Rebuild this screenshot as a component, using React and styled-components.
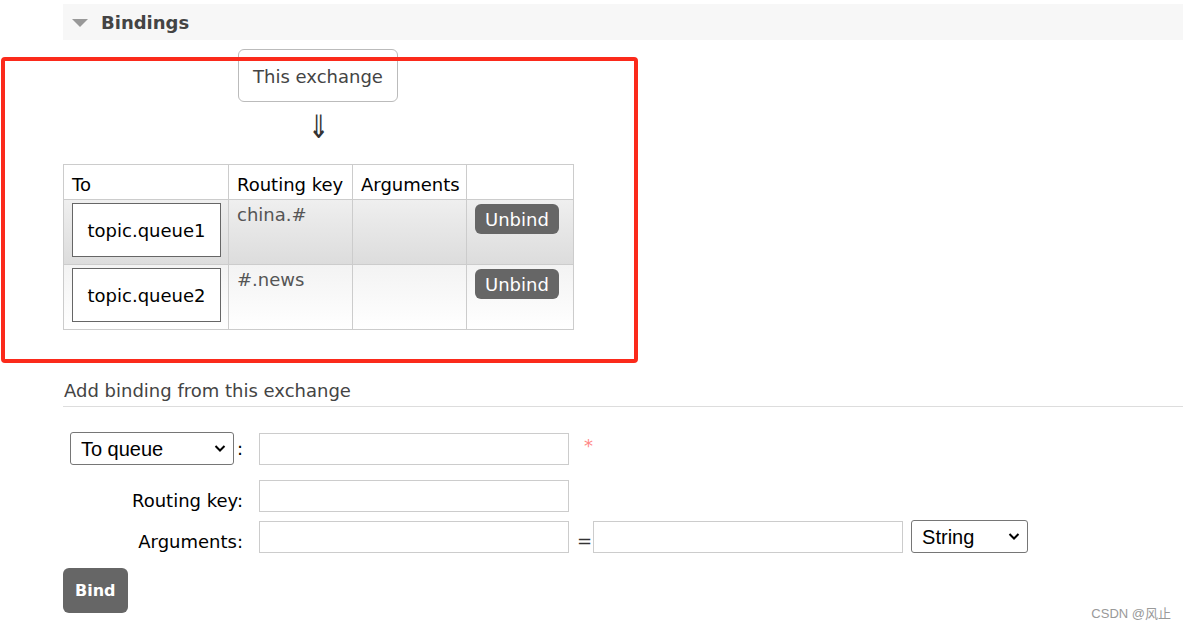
import React from 'react';
import styled, { createGlobalStyle } from 'styled-components';

const GlobalStyle = createGlobalStyle`
	body {
		margin: 0;
		background: #fff;
		font-family: "DejaVu Sans", Verdana, sans-serif;
		font-size: 18px;
		color: #444;
	}
`;

const Page = styled.div`
	position: relative;
	width: 1183px;
	height: 630px;
	overflow: hidden;
	padding-top: 4px;
	box-sizing: border-box;
`;

const SectionBar = styled.div`
	margin-left: 63px;
	height: 36px;
	background: #f7f7f7;
	display: flex;
	align-items: center;
	gap: 13px;
	padding-left: 9px;
`;

const Triangle = styled.span`
	width: 0;
	height: 0;
	border-left: 8px solid transparent;
	border-right: 8px solid transparent;
	border-top: 8px solid #999;
	margin-top: 2px;
`;

const SectionTitle = styled.h2`
	margin: 0;
	font-size: 18px;
	font-weight: bold;
	color: #444;
`;

const Body = styled.div`
	margin-left: 63px;
`;

const Diagram = styled.div`
	display: flex;
	flex-direction: column;
	align-items: flex-start;
	padding-top: 9px;
`;

const ExchangeBox = styled.div`
	margin-left: 175px;
	width: 160px;
	height: 53px;
	box-sizing: border-box;
	border: 1px solid #bbb;
	border-radius: 6px;
	display: flex;
	justify-content: center;
	padding-top: 16px;
	color: #444;
`;

const Arrow = styled.div`
	margin-left: 243px;
	height: 62px;
	font-size: 30px;
	line-height: 1;
	padding-top: 8px;
	box-sizing: border-box;
	color: #333;
	transform: scale(0.85, 1.08);
	transform-origin: center top;
`;

const Table = styled.table`
	border-collapse: collapse;
	table-layout: fixed;
	width: 510px;
	color: #000;
`;

const Th = styled.th`
	border: 1px solid #ccc;
	font-weight: normal;
	text-align: left;
	white-space: nowrap;
	height: 35px;
	padding: 4px 8px 0;
	box-sizing: border-box;
`;

const Tr = styled.tr`
	background: ${({ alt }) =>
		alt
			? 'linear-gradient(#f3f3f3, #fff)'
			: 'linear-gradient(#efefef, #dcdcdc)'};
`;

const Td = styled.td`
	border: 1px solid #ccc;
	vertical-align: top;
	height: 65px;
	padding: ${({ pad }) => pad || '4px 8px'};
	box-sizing: border-box;
	color: #555;
	white-space: nowrap;
`;

const QueueBox = styled.div`
	width: 149px;
	height: 54px;
	box-sizing: border-box;
	border: 1px solid #666;
	background: #fff;
	display: flex;
	align-items: center;
	justify-content: center;
	color: #000;
`;

const Button = styled.button`
	font-family: "DejaVu Sans", Verdana, sans-serif;
	font-weight: ${({ big }) => (big ? 'bold' : 'normal')};
	font-size: ${({ big }) => (big ? 16 : 18)}px;
	color: #fff;
	background: #666;
	border: 0;
	border-radius: 6px;
	padding: ${({ big }) => (big ? '0 12px' : '0 10px')};
	height: ${({ big }) => (big ? 45 : 30)}px;
	cursor: pointer;
`;

const AddHeading = styled.h3`
	margin: 50px 0 0;
	font-size: 18px;
	font-weight: normal;
	color: #444;
	padding-left: 1px;
	padding-bottom: 4px;
	border-bottom: 1px solid #ddd;
	line-height: 22px;
`;

const Form = styled.div`
	display: grid;
	grid-template-columns: 188px auto;
	column-gap: 8px;
	padding-top: 25px;
	align-items: center;
`;

const Label = styled.label`
	display: flex;
	justify-content: flex-end;
	align-items: center;
	color: #000;
	padding-right: 8px;
	padding-top: ${({ pt }) => pt || 0}px;
	box-sizing: border-box;
	height: ${({ h }) => h || 32}px;
	margin-top: ${({ mt }) => mt || 0}px;
`;

const Field = styled.div`
	display: flex;
	align-items: center;
	margin-top: ${({ mt }) => mt || 0}px;
`;

const Input = styled.input`
	width: 310px;
	height: 32px;
	box-sizing: border-box;
	border: 1px solid #ccc;
	background: #fff;
	font-size: 16px;
`;

const SelectWrap = styled.div`
	position: relative;
	display: inline-flex;
	margin-left: ${({ ml }) => ml || 0}px;
	margin-right: ${({ mr }) => mr || 0}px;
`;

const Select = styled.select`
	appearance: none;
	font-family: "Liberation Sans", Arial, sans-serif;
	font-size: 20px;
	color: #000;
	width: ${({ w }) => w}px;
	height: 33px;
	border: 1px solid #767676;
	border-radius: 3px;
	background: #fff;
	padding: 0 24px 0 10px;
`;

const Chevron = styled.svg`
	position: absolute;
	right: 8px;
	top: 12px;
	width: 12px;
	height: 9px;
	pointer-events: none;
`;

const Required = styled.span`
	color: #f88;
	margin-left: 15px;
	margin-top: -6px;
	font-size: 18px;
`;

const Eq = styled.span`
	color: #333;
	margin: 0 1px 0 8px;
	padding-top: 8px;
`;

const BindRow = styled.div`
	margin-top: 15px;
`;

const Annotation = styled.div`
	position: absolute;
	left: 1px;
	top: 57px;
	width: 637px;
	height: 306px;
	box-sizing: border-box;
	border: 4px solid #fb2a1b;
	border-radius: 4px;
	pointer-events: none;
`;

const Watermark = styled.div`
	position: absolute;
	right: 12px;
	bottom: 8px;
	font-family: "Liberation Sans", "Noto Sans CJK SC", sans-serif;
	font-size: 13px;
	color: #999;
`;

const bindings = [
	{ queue: 'topic.queue1', key: 'china.#' },
	{ queue: 'topic.queue2', key: '#.news' },
];

const Dropdown = ({ width, options, ml, mr }) => (
	<SelectWrap ml={ml} mr={mr}>
		<Select w={width}>
			{options.map((o) => (
				<option key={o}>{o}</option>
			))}
		</Select>
		<Chevron viewBox="0 0 12 9">
			<path d="M1.5 2 L6 6.5 L10.5 2" fill="none" stroke="#000" strokeWidth="2" />
		</Chevron>
	</SelectWrap>
);

const App = () => (
	<Page>
		<GlobalStyle />
		<SectionBar>
			<Triangle />
			<SectionTitle>Bindings</SectionTitle>
		</SectionBar>
		<Body>
			<Diagram>
				<ExchangeBox>This exchange</ExchangeBox>
				<Arrow>⇓</Arrow>
				<Table>
					<colgroup>
						<col style={{ width: 165 }} />
						<col style={{ width: 124 }} />
						<col style={{ width: 114 }} />
						<col style={{ width: 107 }} />
					</colgroup>
					<thead>
						<tr>
							<Th>To</Th>
							<Th>Routing key</Th>
							<Th>Arguments</Th>
							<Th />
						</tr>
					</thead>
					<tbody>
						{bindings.map((b, i) => (
							<Tr key={b.queue} alt={i === 1}>
								<Td pad="3px 8px">
									<QueueBox>{b.queue}</QueueBox>
								</Td>
								<Td>{b.key}</Td>
								<Td />
								<Td pad="4px 8px">
									<Button>Unbind</Button>
								</Td>
							</Tr>
						))}
					</tbody>
				</Table>
			</Diagram>
			<AddHeading>Add binding from this exchange</AddHeading>
			<Form>
				<Label h={33}>
					<Dropdown width={164} options={['To queue', 'To exchange']} mr={3} />
					:
				</Label>
				<Field>
					<Input />
					<Required>*</Required>
				</Field>
				<Label mt={15} pt={8}>Routing key:</Label>
				<Field mt={15}>
					<Input />
				</Field>
				<Label mt={8} pt={10}>Arguments:</Label>
				<Field mt={8}>
					<Input />
					<Eq>=</Eq>
					<Input />
					<Dropdown width={117} options={['String', 'Number', 'Boolean']} ml={8} />
				</Field>
			</Form>
			<BindRow>
				<Button big>Bind</Button>
			</BindRow>
		</Body>
		<Annotation />
		<Watermark>CSDN @风止</Watermark>
	</Page>
);

export default App;
